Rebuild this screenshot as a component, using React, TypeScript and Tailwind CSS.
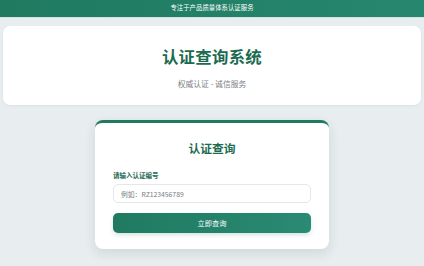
import React from "react";

export default function App() {
  const font = { fontFamily: '"Noto Sans CJK SC", "Noto Sans", sans-serif' };
  return (
    <div className="w-[424px] h-[266px] bg-[#e8edef] overflow-hidden" style={font}>
      <div className="h-[18px] bg-gradient-to-r from-[#1f7a60] to-[#26876f] flex items-center justify-center text-white text-[6.4px] leading-none border-b border-[#d5e3df]">
        专注于产品质量体系认证服务
      </div>
      <div className="mx-[3px] mt-[8px] h-[79px] bg-white rounded-[7px] shadow-[0_1px_3px_rgba(0,0,0,0.06)] flex flex-col items-center pt-[22px]">
        <div className="text-[16.4px] leading-none font-bold text-[#1c6b51] tracking-[0.3px]">认证查询系统</div>
        <div className="mt-[16px] text-[7.8px] leading-none text-[#7b8186]">权威认证 - 诚信服务</div>
      </div>
      <div className="mx-auto mt-[15px] w-[234px] h-[129px] bg-white rounded-[8px] border-t-[3px] border-[#1f7a60] shadow-[0_4px_12px_rgba(30,60,60,0.12)] px-[18px] pt-[19px]">
        <div className="text-center text-[11.8px] leading-none font-bold text-[#1c6b51]">认证查询</div>
        <div className="mt-[18px] text-[6.5px] leading-none font-bold text-[#1f6b53]">请输入认证编号</div>
        <div className="mt-[6px] h-[19px] rounded-[5px] border border-[#e4e8ea] flex items-center px-[7px] text-[6.8px] text-[#777c80]">
          例如：RZ123456789
        </div>
        <div className="mt-[10px] h-[20px] rounded-[5px] bg-gradient-to-r from-[#1f7a60] to-[#2a8a74] flex items-center justify-center text-white text-[7.2px] shadow-[0_2px_4px_rgba(31,122,96,0.2)]">
          立即查询
        </div>
      </div>
    </div>
  );
}
